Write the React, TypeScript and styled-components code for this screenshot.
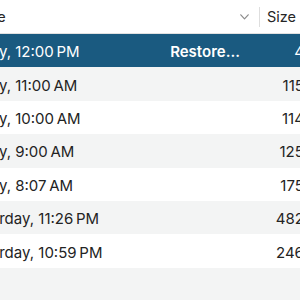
import React from "react";
import styled, { createGlobalStyle } from "styled-components";

const Global = createGlobalStyle`
  html, body { margin: 0; padding: 0; background: #ffffff; overflow: hidden; }
  body { font-family: Inter, "Noto Sans", "Liberation Sans", sans-serif; -webkit-font-smoothing: antialiased; }
`;

const Viewport = styled.div`
  width: 300px;
  height: 300px;
  overflow: hidden;
  background: #ffffff;
`;

const Table = styled.div`
  width: 380px;
  margin-left: -40px;
  display: flex;
  flex-direction: column;
`;

const Header = styled.div`
  display: grid;
  grid-template-columns: 299px 1fr;
  height: 34px;
  border-bottom: 1px solid #e1e1e1;
  box-sizing: border-box;
  color: #262626;
  font-size: 14.5px;
`;

const HeaderCell = styled.div<{ $divider?: boolean }>`
  display: flex;
  align-items: center;
  justify-content: space-between;
  padding: 0 10px 0 ${(p) => (p.$divider ? "7px" : "14px")};
  border-left: ${(p) => (p.$divider ? "1px solid #dedede" : "none")};
  height: 20px;
  align-self: center;
`;

const Chevron = styled.svg`
  width: 9px;
  height: 6px;
  flex: none;
`;

const Row = styled.div<{ $selected?: boolean; $odd?: boolean }>`
  display: grid;
  grid-template-columns: 299px 75px;
  height: 33.4px;
  align-items: center;
  font-size: 15px;
  background: ${(p) => (p.$selected ? "#1a5a80" : p.$odd ? "#f3f4f4" : "#ffffff")};
  color: ${(p) => (p.$selected ? "#ffffff" : "#232323")};
`;

const NameCell = styled.div`
  display: flex;
  justify-content: space-between;
  align-items: center;
  padding: 2px 19px 0 4px;
  white-space: nowrap;
`;

const SizeCell = styled.div`
  text-align: right;
  padding: 2px 6px 0 0;
  white-space: nowrap;
`;

const Restore = styled.span`
  font-weight: 600;
  color: #ffffff;
`;

const rows = [
  { date: "Today, 12:00\u202FPM", size: "4 KB", selected: true },
  { date: "Today, 11:00\u202FAM", size: "115 KB" },
  { date: "Today, 10:00\u202FAM", size: "114 KB" },
  { date: "Today, 9:00\u202FAM", size: "125 KB" },
  { date: "Today, 8:07\u202FAM", size: "175 KB" },
  { date: "Yesterday, 11:26\u202FPM", size: "482 KB", shift: true },
  { date: "Yesterday, 10:59\u202FPM", size: "246 KB", shift: true },
];

const DateText = styled.span<{ $shift?: boolean }>`
  margin-left: ${(p) => (p.$shift ? "-4px" : "0")};
`;

export default function App() {
  return (
    <Viewport>
      <Global />
      <Table>
        <Header>
          <HeaderCell>
            <span>Date</span>
            <Chevron viewBox="0 0 9 6">
              <path d="M0.8 0.8 L4.5 4.8 L8.2 0.8" fill="none" stroke="#8c8c8c" strokeWidth="1.2" strokeLinecap="round" strokeLinejoin="round" />
            </Chevron>
          </HeaderCell>
          <HeaderCell $divider>
            <span>Size</span>
          </HeaderCell>
        </Header>
        {rows.map((r, i) => (
          <Row key={i} $selected={r.selected} $odd={i % 2 === 1}>
            <NameCell>
              <DateText $shift={r.shift}>{r.date}</DateText>
              {r.selected && <Restore>Restore...</Restore>}
            </NameCell>
            <SizeCell>{r.size}</SizeCell>
          </Row>
        ))}
        <Row $odd>
          <NameCell />
          <SizeCell />
        </Row>
      </Table>
    </Viewport>
  );
}
